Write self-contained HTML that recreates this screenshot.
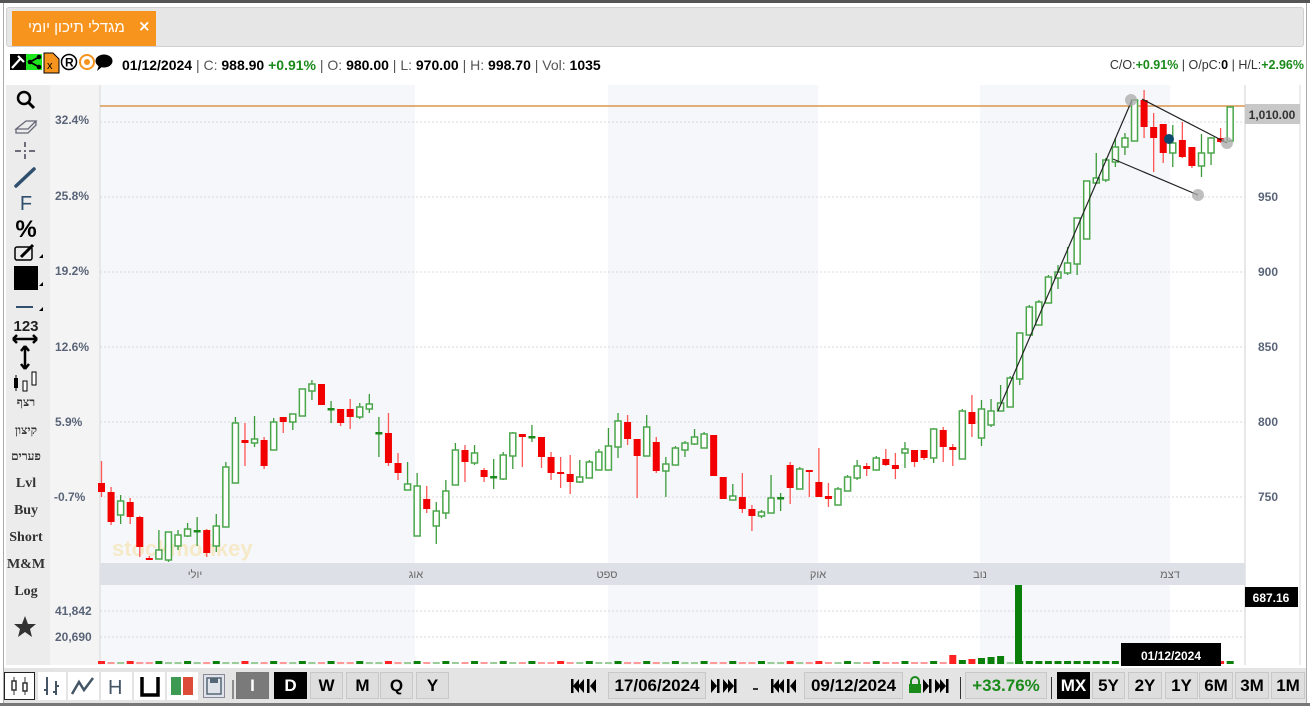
<!DOCTYPE html>
<html><head><meta charset="utf-8">
<style>
*{margin:0;padding:0;box-sizing:border-box}
body{width:1310px;height:706px;background:#fff;font-family:"Liberation Sans",Arial,sans-serif;position:relative;overflow:hidden}
.abs{position:absolute}
.btn{position:absolute;top:672px;height:27px;border:1px solid #c8c8c8;background:#dedede;font:bold 17px "Liberation Sans",sans-serif;text-align:center;line-height:25px;color:#000}
.tb{position:absolute;left:6px;width:40px;text-align:center;font:bold 14px "Liberation Serif","Noto Serif CJK SC",serif;color:#333}
</style></head><body>
<div class="abs" style="left:0;top:0;width:1310px;height:3px;background:#555"></div>
<div class="abs" style="left:3px;top:3px;width:1304px;height:701px;border:1px solid #aaa;border-top:none"></div>
<div class="abs" style="left:0;top:703px;width:1310px;height:3px;background:#777"></div>
<!-- tab bar -->
<div class="abs" style="left:6px;top:7px;width:1298px;height:40px;background:#e6e6e6;border:1px solid #d0d0d0;border-radius:3px"></div>
<div class="abs" style="left:12px;top:11px;width:144px;height:35px;background:#f7941d"></div>
<div class="abs" style="left:28px;top:19px;color:#fff;font:15px 'Liberation Sans','Noto Sans CJK JP',sans-serif;direction:rtl">מגדלי תיכון יומי</div>
<div class="abs" style="left:138px;top:17px;color:#fff;font:bold 15px 'DejaVu Sans',sans-serif">×</div>
<!-- info line icons -->
<svg class="abs" style="left:10px;top:52px" width="112" height="22">
<rect x="0" y="2" width="16" height="16" fill="#000"/><path d="M2 16 L11 6 M8 4 L14 10" stroke="#fff" stroke-width="2.2"/>
<rect x="16" y="2" width="16" height="16" fill="#1ee61e"/><circle cx="20" cy="10" r="2.3" fill="#000"/><circle cx="29" cy="5" r="2.3" fill="#000"/><circle cx="29" cy="15" r="2.3" fill="#000"/><path d="M20 10 L29 5 M20 10 L29 15" stroke="#000" stroke-width="1.7"/>
<path d="M34 1 H43 L49 7 V21 H34 Z" fill="#f7941d" stroke="#000"/><text x="37" y="17" font-size="11" font-family="Liberation Sans">x</text>
<circle cx="59" cy="10" r="7.5" fill="#fff" stroke="#000" stroke-width="1.5"/><text x="55" y="14.5" font-size="12" font-weight="bold" font-family="Liberation Sans">R</text>
<circle cx="77" cy="10" r="7" fill="none" stroke="#f7941d" stroke-width="2"/><circle cx="77" cy="10" r="3" fill="#f7941d"/>
<ellipse cx="94" cy="9" rx="8.5" ry="6.5" fill="#000"/><path d="M89 13 L87 19 L93 14Z" fill="#000"/>
</svg>
<div class="abs" style="left:122px;top:57px;font-size:14px;color:#555;white-space:nowrap"><b style="color:#000">01/12/2024</b> | C: <b style="color:#000">988.90</b> <b style="color:#1a8a1a">+0.91%</b> | O: <b style="color:#000">980.00</b> | L: <b style="color:#000">970.00</b> | H: <b style="color:#000">998.70</b> | Vol: <b style="color:#000">1035</b></div>
<div class="abs" style="right:6px;top:58px;font-size:12.5px;color:#333;white-space:nowrap">C/O:<b style="color:#1a8a1a">+0.91%</b> | O/pC:<b style="color:#000">0</b> | H/L:<b style="color:#1a8a1a">+2.96%</b></div>
<!-- left toolbar -->
<div class="abs" style="left:6px;top:85px;width:44px;height:580px;background:#ececec"></div>
<div class="abs" style="left:50px;top:85px;width:50px;height:580px;background:#f4f4f4"></div>
<svg class="abs" style="left:6px;top:85px" width="44" height="560">
<circle cx="18" cy="13" r="6" fill="none" stroke="#000" stroke-width="2.5"/><path d="M22 17 L28 23" stroke="#000" stroke-width="3"/>
<path d="M10 44 L20 36 H30 L22 44 Z M10 44 V48 H22 L30 40 V36" fill="none" stroke="#667" stroke-width="1.3"/>
<path d="M19 57 V62 M19 69 V74 M9 66 H15 M23 66 H29" stroke="#445" stroke-width="1.5"/><circle cx="19" cy="66" r="1" fill="#445"/>
<path d="M10 101 L28 84" stroke="#2f4f6f" stroke-width="3.5" stroke-linecap="round"/>
<rect x="8" y="181" width="24" height="24" fill="#000"/>
<path d="M10 222 H27" stroke="#2f4f6f" stroke-width="2"/>
<path d="M7 254 H31 M7 254 L11 250 M7 254 L11 258 M31 254 L27 250 M31 254 L27 258" stroke="#000" stroke-width="2.5" fill="none"/>
<path d="M19 261 V284 M19 261 L15 266 M19 261 L23 266 M19 284 L15 279 M19 284 L23 279" stroke="#000" stroke-width="2.5" fill="none"/>
<rect x="8" y="293" width="4" height="10" fill="#000"/><path d="M10 290 V306" stroke="#000"/><rect x="17" y="296" width="4" height="10" fill="#fff" stroke="#000"/><rect x="26" y="287" width="4" height="13" fill="#fff" stroke="#000"/>
<path d="M19 531 L22 539 L30 539 L24 544 L26 552 L19 547 L12 552 L14 544 L8 539 L16 539 Z" fill="#333"/>
<path d="M33 173 L37 173 L37 169Z M33 201 L37 201 L37 197Z M33 226 L37 226 L37 222Z" fill="#000"/>
<rect x="9" y="162" width="17" height="13" rx="2" fill="none" stroke="#000" stroke-width="1.5"/><path d="M15 172 L27 160" stroke="#000" stroke-width="3"/>
</svg>
<div class="tb" style="top:193px;font:20px 'Liberation Sans',sans-serif;color:#2f4f6f">F</div>
<div class="tb" style="top:216px;font:bold 24px 'Liberation Sans',sans-serif;color:#000">%</div>
<div class="tb" style="top:318px;font:bold 15px 'Liberation Sans',sans-serif;color:#222">123</div>
<div class="tb" style="top:395px;font-size:12px">רצף</div>
<div class="tb" style="top:423px;font-size:12px">קיצון</div>
<div class="tb" style="top:449px;font-size:12px">פערים</div>
<div class="tb" style="top:476px">Lvl</div>
<div class="tb" style="top:503px">Buy</div>
<div class="tb" style="top:530px">Short</div>
<div class="tb" style="top:557px">M&amp;M</div>
<div class="tb" style="top:584px">Log</div>
<!-- left axis labels -->
<div class="abs" style="left:55px;top:0;font:bold 12px 'Liberation Sans',sans-serif;color:#5a6478">
<div class="abs" style="top:113px">32.4%</div><div class="abs" style="top:189px">25.8%</div><div class="abs" style="top:264px">19.2%</div><div class="abs" style="top:340px">12.6%</div><div class="abs" style="top:415px">5.9%</div><div class="abs" style="top:490px;left:-1px">-0.7%</div><div class="abs" style="top:604px">41,842</div><div class="abs" style="top:630px">20,690</div>
</div>
<!-- chart -->
<svg class="abs" style="left:0;top:0" width="1310" height="706" id="ch">
<g>
<rect x="100" y="85" width="1145" height="580" fill="#fff"/>
<rect x="100" y="85" width="315" height="580" fill="#f5f7fa"/>
<rect x="608" y="85" width="210" height="580" fill="#f5f7fa"/>
<rect x="980" y="85" width="190" height="580" fill="#f5f7fa"/>
<line x1="100" y1="85" x2="100" y2="665" stroke="#d8d8d8"/>
<line x1="1245" y1="85" x2="1245" y2="665" stroke="#d0d0d0"/>
<line x1="1300" y1="85" x2="1300" y2="665" stroke="#d8d8d8"/>
<g stroke="#d6d9e0" stroke-dasharray="2,2">
<line x1="100" y1="122" x2="1245" y2="122"/><line x1="100" y1="197" x2="1245" y2="197"/><line x1="100" y1="272" x2="1245" y2="272"/><line x1="100" y1="347" x2="1245" y2="347"/><line x1="100" y1="422" x2="1245" y2="422"/><line x1="100" y1="497" x2="1245" y2="497"/><line x1="100" y1="611" x2="1245" y2="611"/><line x1="100" y1="637" x2="1245" y2="637"/>
</g>
<rect x="100" y="563" width="1145" height="22" fill="#dde1e7"/>
<g font-family="Liberation Sans,Noto Sans CJK JP,sans-serif" font-size="11" fill="#666" text-anchor="middle">
<text x="195" y="578">יולי</text><text x="416" y="578">אוג</text><text x="607" y="578">ספט</text><text x="818" y="578">אוק</text><text x="980" y="578">נוב</text><text x="1170" y="578">דצמ</text>
</g>
<text x="112" y="556" font-family="Liberation Sans" font-weight="bold" font-size="22" fill="#f7d98a" opacity="0.45">stockmonkey</text>
<g font-family="Liberation Sans" font-weight="bold" font-size="12" fill="#5a6478" text-anchor="middle">
<text x="1268" y="201">950</text><text x="1268" y="276">900</text><text x="1268" y="351">850</text><text x="1268" y="426">800</text><text x="1268" y="501">750</text>
</g>
<line x1="100" y1="106" x2="1245" y2="106" stroke="#d9954d" stroke-width="1.5"/>
<rect x="1245" y="104" width="55" height="20" fill="#c8c8c8"/>
<text x="1272" y="119" text-anchor="middle" font-family="Liberation Sans" font-weight="bold" font-size="12" fill="#333">1,010.00</text>
<g id="cd"></g>
<g id="vol"></g>
<rect x="1015" y="585" width="7" height="79" fill="#0a800a"/>
<g stroke="#222" stroke-width="1.2">
<line x1="998" y1="411" x2="1132" y2="100"/><line x1="1142" y1="99" x2="1227" y2="143"/><line x1="1113" y1="159" x2="1198" y2="195"/>
</g>
<g fill="#aaa" opacity="0.75"><circle cx="1131" cy="100" r="6"/><circle cx="1227" cy="143" r="6"/><circle cx="1198" cy="195" r="6"/></g>
<circle cx="1169" cy="139" r="5" fill="#0d4a6e"/>
<rect x="1245" y="587" width="53" height="20" fill="#000"/>
<text x="1271" y="602" text-anchor="middle" font-family="Liberation Sans" font-weight="bold" font-size="12" fill="#fff">687.16</text>
<rect x="1121" y="643" width="100" height="23" fill="#000"/>
<text x="1171" y="660" text-anchor="middle" font-family="Liberation Sans" font-weight="bold" font-size="12" fill="#fff">01/12/2024</text>
</g>
</svg>
<!-- bottom toolbar -->
<div class="abs" style="left:4px;top:668px;width:1302px;height:35px;background:#e4e4e4"></div>
<svg class="abs" style="left:4px;top:672px" width="230" height="28">
<rect x="0.5" y="0.5" width="30" height="27" fill="#fff" stroke="#222"/>
<path d="M10 5 V23 M21 5 V23" stroke="#333"/><rect x="8" y="9" width="4" height="9" fill="#fff" stroke="#333" stroke-width="1.5"/><rect x="19" y="11" width="4" height="8" fill="#fff" stroke="#333" stroke-width="1.5"/>
<rect x="34" y="0" width="28" height="28" fill="#fff"/><path d="M43 5 V23 M40 18 H43 M52 9 V23 M52 14 H55 M49 20 H52" stroke="#456" stroke-width="2"/>
<rect x="64" y="0" width="31" height="28" fill="#fff"/><path d="M68 22 L75 10 L80 18 L89 6" stroke="#456" stroke-width="2.5" fill="none"/>
<rect x="97" y="0" width="31" height="28" fill="#fff"/><text x="104" y="22" font-family="Liberation Sans" font-size="20" fill="#456">H</text>
<rect x="130" y="0" width="31" height="28" fill="#fff"/><path d="M138 5 V23 H154 V5" stroke="#000" stroke-width="3.5" fill="none"/>
<rect x="163" y="0" width="31" height="28" fill="#fff"/><rect x="167" y="5" width="10" height="18" fill="#3c9a52"/><rect x="179" y="5" width="10" height="18" fill="#dd4b39"/>
<rect x="199.5" y="2.5" width="21" height="23" fill="#e0e4ea" stroke="#889"/><rect x="203" y="6" width="14" height="16" fill="none" stroke="#567" stroke-width="1.5"/><rect x="206" y="6" width="8" height="5" fill="#567"/>
<path d="M229 8 V27" stroke="#333"/>
</svg>
<div class="btn" style="left:236px;width:33px;background:#7a7a7a;color:#fff;border-color:#777">I</div>
<div class="btn" style="left:274px;width:33px;background:#000;color:#fff;border-color:#000">D</div>
<div class="btn" style="left:310px;width:33px">W</div>
<div class="btn" style="left:346px;width:33px">M</div>
<div class="btn" style="left:380px;width:33px">Q</div>
<div class="btn" style="left:416px;width:33px">Y</div>
<svg class="abs" style="left:568px;top:677px" width="400" height="18">
<g fill="#000">
<!-- first back group at 570 -->
<rect x="3" y="2" width="2.5" height="14"/><path d="M5 9 L11 2 V16Z M10 9 L16 2 V16Z"/><rect x="19" y="2" width="2.5" height="14"/><path d="M22 9 L28 2 V16Z"/>
<!-- forward at 710 -->
<path d="M143 2 L149 9 L143 16Z"/><rect x="149" y="2" width="2.5" height="14"/><path d="M155 2 L161 9 L155 16Z M160 2 L166 9 L160 16Z"/><rect x="166" y="2" width="2.5" height="14"/>
<rect x="185" y="11" width="5" height="2" fill="#333"/>
<!-- back at 770 -->
<rect x="203" y="2" width="2.5" height="14"/><path d="M205 9 L211 2 V16Z M210 9 L216 2 V16Z"/><rect x="219" y="2" width="2.5" height="14"/><path d="M222 9 L228 2 V16Z"/>
<!-- forward at 922 -->
<path d="M355 2 L361 9 L355 16Z"/><rect x="361" y="2" width="2.5" height="14"/><path d="M367 2 L373 9 L367 16Z M372 2 L378 9 L372 16Z"/><rect x="378" y="2" width="2.5" height="14"/>
</g>
</svg>
<div class="btn" style="left:608px;width:98px">17/06/2024</div>
<div class="btn" style="left:804px;width:99px">09/12/2024</div>
<svg class="abs" style="left:908px;top:676px" width="14" height="18"><path d="M3 8 V5 A4 4 0 0 1 11 5 V8" stroke="#1a8a1a" stroke-width="2" fill="none"/><rect x="1" y="8" width="12" height="9" fill="#1a8a1a"/></svg>
<div class="abs" style="left:960px;top:677px;width:1px;height:22px;background:#333"></div>
<div class="btn" style="left:965px;width:82px;color:#1a8a1a">+33.76%</div>
<div class="abs" style="left:1051px;top:677px;width:1px;height:22px;background:#333"></div>
<div class="btn" style="left:1057px;width:33px;background:#000;color:#fff;border-color:#000">MX</div>
<div class="btn" style="left:1092px;width:33px">5Y</div>
<div class="btn" style="left:1128px;width:34px">2Y</div>
<div class="btn" style="left:1165px;width:33px">1Y</div>
<div class="btn" style="left:1199px;width:34px">6M</div>
<div class="btn" style="left:1235px;width:34px">3M</div>
<div class="btn" style="left:1271px;width:34px">1M</div>
<script>
var D=[
[461,483,492,497,'r'],[487,492,522,525,'r'],[495,501,515,524,'g'],[498,502,517,524,'r'],[516,517,547,557,'r'],[556,558,560,560,'r'],[530,550,559,559,'g'],[532,532,560,562,'g'],[530,535,546,550,'g'],[523,529,536,537,'g'],[517,530,532,546,'g'],[529,530,553,557,'r'],[514,526,546,552,'g'],[462,467,527,527,'g'],[417,423,483,483,'g'],[423,440,443,466,'r'],[416,439,443,447,'g'],[437,440,466,469,'r'],[418,422,450,450,'g'],[417,417,422,433,'r'],[414,414,422,430,'g'],[389,389,416,416,'g'],[380,384,391,400,'g'],[384,384,405,405,'r'],[401,408,410,423,'g'],[409,409,423,426,'r'],[399,409,417,429,'r'],[403,407,417,419,'g'],[394,404,409,413,'g'],[417,432,434,457,'g'],[413,433,463,466,'r'],[453,463,473,480,'r'],[462,484,490,490,'g'],[473,486,536,536,'g'],[486,499,509,513,'r'],[502,511,526,544,'g'],[480,491,513,519,'g'],[443,450,485,485,'g'],[445,450,462,482,'r'],[445,453,463,465,'g'],[468,470,477,482,'r'],[459,476,478,489,'g'],[452,455,479,480,'g'],[432,433,456,469,'g'],
[434,434,437,467,'r'],[425,436,438,442,'g'],[437,437,457,468,'r'],[452,457,473,480,'r'],[457,472,474,488,'r'],[455,474,482,494,'r'],[460,477,482,483,'g'],[460,462,478,478,'g'],[449,452,470,470,'g'],[428,446,470,470,'g'],[413,421,447,458,'g'],[415,422,439,445,'r'],[439,439,456,498,'r'],[415,427,456,456,'g'],[437,442,471,473,'r'],[457,464,471,497,'g'],[446,448,465,465,'g'],[441,443,450,457,'g'],[429,437,444,445,'g'],[432,434,448,448,'g'],[435,435,476,476,'r'],[477,477,499,499,'r'],[484,496,500,500,'g'],[473,497,509,513,'r'],[505,509,516,531,'r'],[510,512,516,518,'g'],[475,498,513,513,'g'],[493,497,499,511,'g'],[462,465,488,504,'r'],[467,469,489,489,'g'],[470,470,472,497,'r'],[448,482,497,497,'r'],[483,496,499,507,'r'],[487,489,505,505,'g'],[475,477,491,491,'g'],[460,466,478,480,'g'],[463,466,469,476,'r'],[456,458,470,470,'g'],[449,459,465,466,'r'],[453,465,469,479,'r'],[442,449,453,468,'g'],[450,450,462,467,'r'],[450,450,458,460,'r'],[428,429,458,463,'g'],[427,430,447,462,'r'],[444,447,450,466,'r'],[409,411,459,459,'g'],[395,412,424,437,'r'],
[400,409,438,446,'g'],[399,411,425,427,'g'],[385,403,411,411,'g'],[376,378,407,407,'g'],[333,333,379,385,'g'],[305,307,335,335,'g'],[300,302,325,325,'g'],[275,277,303,303,'g'],[265,272,278,289,'g'],[247,263,273,275,'g'],[218,218,264,275,'g'],[181,181,239,239,'g'],[153,178,183,183,'g'],[158,160,180,182,'g'],[138,147,162,167,'g'],[133,138,147,155,'g'],[100,100,141,141,'g'],[90,100,127,138,'r'],[113,127,138,172,'r'],[124,124,153,163,'r'],[125,143,153,167,'g'],[122,140,157,158,'r'],[147,147,166,168,'r'],[134,153,166,177,'g'],[137,138,153,165,'g'],[128,138,142,143,'r'],[107,107,141,141,'g']];
var s='',v='';
for(var i=0;i<D.length;i++){var d=D[i],x=101.5+i*9.565;
s+='<line x1="'+x+'" y1="'+d[0]+'" x2="'+x+'" y2="'+d[3]+'" stroke="'+(d[4]=='r'?'#f55':'#3a9a3a')+'" stroke-width="1.3"/>';
var h=d[2]-d[1];
if(d[4]=='r'){s+='<rect x="'+(x-3.5)+'" y="'+d[1]+'" width="7" height="'+Math.max(h,2)+'" fill="#f20000"/>';}
else if(h<3){s+='<rect x="'+(x-3.5)+'" y="'+d[1]+'" width="7" height="2.5" fill="#1e8a1e"/>';}
else{s+='<rect x="'+(x-3)+'" y="'+d[1]+'" width="6" height="'+h+'" fill="#fff" stroke="#4aa64a" stroke-width="1.5"/>';}
var vh=2,vc=d[4]=='r'?'#f99':'#9c9';
if(i%3==0){vh=3;vc=d[4]=='r'?'#f22':'#0a800a';}
if(x>950&&x<1010){vh=4+((i*7)%6);vc=d[4]=='r'?'#f22':'#0a800a';}
if(x>1025){vh=3;vc=d[4]=='r'?'#f22':'#0a800a';}
v+='<rect x="'+(x-3.5)+'" y="'+(664-vh)+'" width="7" height="'+vh+'" fill="'+vc+'"/>';}
document.getElementById('cd').innerHTML=s;
document.getElementById('vol').innerHTML=v;
</script>
</body></html>
